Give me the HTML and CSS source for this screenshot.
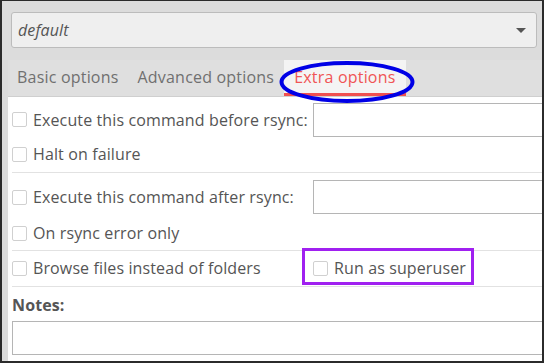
FILE: index.html
```html
<!DOCTYPE html>
<html>
<head>
<meta charset="utf-8">
<link rel="stylesheet" href="styles.css">
</head>
<body>
<div class="frame">
  <div class="top">
    <div class="combo">
      <span class="combo-text">default</span>
      <span class="combo-arrow"></span>
    </div>
  </div>
  <div class="tabs">
    <div class="tab">Basic options</div>
    <div class="tab">Advanced options</div>
    <div class="tab active">Extra options</div>
  </div>
  <div class="content">
    <div class="row r1">
      <label class="check col1"><span class="box"></span>Execute this command before rsync:</label>
      <div class="input"></div>
    </div>
    <div class="row">
      <label class="check"><span class="box"></span>Halt on failure</label>
    </div>
    <div class="sep s1"></div>
    <div class="row">
      <label class="check col1"><span class="box"></span>Execute this command after rsync:</label>
      <div class="input"></div>
    </div>
    <div class="row r4">
      <label class="check"><span class="box"></span>On rsync error only</label>
    </div>
    <div class="sep s2"></div>
    <div class="row">
      <label class="check col1"><span class="box"></span>Browse files instead of folders</label>
      <label class="check"><span class="box"></span>Run as superuser</label>
    </div>
    <div class="sep s3"></div>
    <div class="notes-label">Notes:</div>
    <div class="notes"></div>
  </div>
  <svg class="ellipse" width="144" height="48" viewBox="0 0 144 48"><ellipse cx="70" cy="22" rx="65.5" ry="19" fill="none" stroke="#0000e6" stroke-width="4"/></svg>
  <div class="purple"></div>
</div>
</body>
</html>
```
FILE: styles.css
```css
* { box-sizing: border-box; }
html, body { margin: 0; padding: 0; }
body { font-family: "Open Sans", "DejaVu Sans", sans-serif; font-size: 16px; letter-spacing: 0.12px; color: #555; }
.frame {
  position: relative;
  width: 544px; height: 363px;
  border-style: solid; border-color: #2b2b2b;
  border-width: 1px 2px 2px 2px;
  background: #dcdcdc;
  overflow: hidden;
}
.top { padding: 11px 5px 0 9px; height: 59px; }
.combo {
  height: 36px;
  border: 1px solid #bcbcbc; border-radius: 3px;
  background: #efefef;
  display: flex; align-items: center; justify-content: space-between;
  padding: 0 10px 0 6px;
}
.combo-text { font-style: italic; color: #555; }
.combo-arrow {
  width: 0; height: 0;
  border-left: 5px solid transparent; border-right: 5px solid transparent;
  border-top: 5px solid #555;
}
.tabs {
  display: flex; height: 37px;
  background: #dfdfdf;
  border-bottom: 1px solid #cfcfcf;
  margin-left: 6px;
  padding-left: 0;
}
.tab { padding: 0 10px 0 9px; line-height: 35px; color: #707070; white-space: nowrap; letter-spacing: 0.2px; }
.tab.active { background: #f4f4f4; color: #f05555; border-bottom: 3px solid #f05050; line-height: 34px; padding: 0 10px; }
.content {
  margin-left: 6px;
  background: #fff;
  height: 300px;
  padding: 5px 0 0 4px;
}
.row { display: flex; align-items: center; height: 34px; white-space: nowrap; }
.row.r1 { height: 35px; }
.row.r4 { height: 36px; padding-top: 2px; }
.check { display: flex; align-items: center; color: #555; }
.box {
  width: 15px; height: 15px; border: 1px solid #d0d0d0; border-radius: 2px;
  background: #fff; margin-right: 6px; flex: none;
}
.col1 { width: 301px; flex: none; }
.input {
  width: 260px; height: 34px;
  border: 1px solid #b5b5b5; flex: none;
}
.sep { height: 1px; background: #e2e2e2; }
.s1 { margin: 1px 0 7px; }
.s2 { margin: 0; }
.s3 { margin: 1px 0 0; }
.notes-label { font-weight: bold; color: #555; height: 34px; line-height: 36px; }
.notes { height: 34px; width: 560px; border: 1px solid #b5b5b5; }
.ellipse { position: absolute; left: 275px; top: 59px; }
.purple {
  position: absolute; left: 300px; top: 247px; width: 172px; height: 37px;
  border: 3px solid #a020f0;
}
```
